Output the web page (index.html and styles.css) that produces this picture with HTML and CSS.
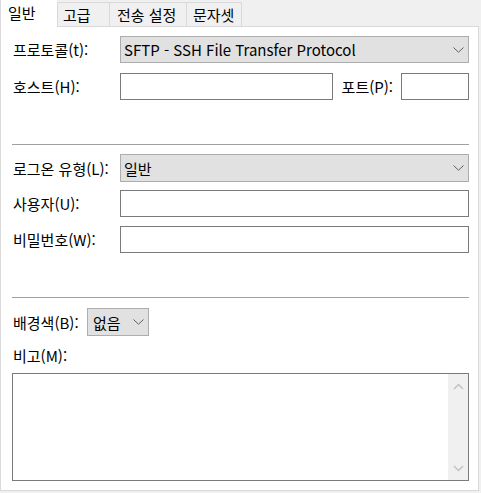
FILE: index.html
```html
<!DOCTYPE html>
<html lang="ko">
<head>
<meta charset="utf-8">
<link rel="stylesheet" href="styles.css">
</head>
<body>
<div class="window">
  <div class="tabs">
    <div class="tab active">일반</div>
    <div class="tab t2">고급</div>
    <div class="tab t3">전송 설정</div>
    <div class="tab t4">문자셋</div>
  </div>
  <div class="panel">
    <div class="row r-proto">
      <div class="label">프로토콜(t):</div>
      <div class="select grow">
        <span>SFTP - SSH File Transfer Protocol</span>
        <svg class="chev" width="11" height="6" viewBox="0 0 11 6"><path d="M0.5 0.5 L5.5 5.2 L10.5 0.5" fill="none" stroke="#606060" stroke-width="1"/></svg>
      </div>
    </div>
    <div class="row r-host">
      <div class="label">호스트(H):</div>
      <div class="input grow"></div>
      <div class="label port-label">포트(P):</div>
      <div class="input port"></div>
    </div>
    <div class="sep sep1"></div>
    <div class="row r-logon">
      <div class="label">로그온 유형(L):</div>
      <div class="select grow">
        <span>일반</span>
        <svg class="chev" width="11" height="6" viewBox="0 0 11 6"><path d="M0.5 0.5 L5.5 5.2 L10.5 0.5" fill="none" stroke="#606060" stroke-width="1"/></svg>
      </div>
    </div>
    <div class="row r-user">
      <div class="label">사용자(U):</div>
      <div class="input grow"></div>
    </div>
    <div class="row r-pass">
      <div class="label">비밀번호(W):</div>
      <div class="input grow"></div>
    </div>
    <div class="sep sep2"></div>
    <div class="row r-bg">
      <div class="label bg-label">배경색(B):</div>
      <div class="select small">
        <span>없음</span>
        <svg class="chev" width="11" height="6" viewBox="0 0 11 6"><path d="M0.5 0.5 L5.5 5.2 L10.5 0.5" fill="none" stroke="#606060" stroke-width="1"/></svg>
      </div>
    </div>
    <div class="memo-label">비고(M):</div>
    <div class="textarea">
      <div class="text-area-body"></div>
      <div class="scrollbar">
        <svg width="11" height="7" viewBox="0 0 11 7"><path d="M1 6 L5.5 1.5 L10 6" fill="none" stroke="#c2c2c2" stroke-width="1.5"/></svg>
        <svg width="11" height="7" viewBox="0 0 11 7"><path d="M1 1 L5.5 5.5 L10 1" fill="none" stroke="#c2c2c2" stroke-width="1.5"/></svg>
      </div>
    </div>
  </div>
</div>
</body>
</html>
```

FILE: styles.css
```css
html, body {
  margin: 0;
  padding: 0;
  background: #f0f0f0;
}
body {
  font-family: "Noto Sans CJK KR", "Noto Sans", sans-serif;
  font-size: 15px;
  color: #000;
}
.window {
  width: 479px;
}
.tabs {
  display: flex;
  align-items: flex-end;
  height: 26px;
}
.tab {
  box-sizing: border-box;
  height: 24px;
  background: #f0f0f0;
  border-top: 1px solid #d9d9d9;
  border-left: 1px solid #d9d9d9;
  display: flex;
  align-items: center;
  padding-left: 5px;
  line-height: 1;
}
.tab.active {
  position: relative;
  z-index: 1;
  height: 27px;
  margin-bottom: -1px;
  width: 57px;
  background: #fff;
  border-top: none;
  padding-left: 7px;
  padding-bottom: 2px;
}
.t2 { width: 52px; }
.t3 { width: 77px; padding-left: 7px; }
.t4 { width: 56px; border-right: 1px solid #d9d9d9; padding-left: 6px; }

.panel {
  box-sizing: border-box;
  width: 479px;
  height: 465px;
  background: #fff;
  border: 1px solid #d9d9d9;
  padding: 9px 9px 0 11px;
  display: flex;
  flex-direction: column;
}
.row {
  display: flex;
  align-items: center;
  height: 27px;
}
.label {
  width: 108px;
  flex: none;
  padding-left: 1px;
  box-sizing: border-box;
  white-space: nowrap;
  line-height: 1;
}
.grow { flex: 1; }
.select {
  box-sizing: border-box;
  height: 100%;
  background: #e1e1e1;
  border: 1px solid #adadad;
  display: flex;
  align-items: center;
  justify-content: space-between;
  padding: 0 4px 0 3px;
  line-height: 1;
}
.input {
  box-sizing: border-box;
  height: 100%;
  background: #fff;
  border: 1px solid #7a7a7a;
}
.r-host { margin-top: 10px; }
.port-label {
  width: auto;
  margin: 0 8px 0 9px;
  padding-left: 0;
}
.port { width: 68px; flex: none; }
.sep {
  height: 1px;
  background: #a0a0a0;
  flex: none;
}
.sep1 { margin-top: 44px; }
.r-logon { margin-top: 9px; height: 28px; }
.r-user { margin-top: 8px; }
.r-pass { margin-top: 9px; }
.sep2 { margin-top: 44px; }
.r-bg { margin-top: 10px; height: 28px; }
.bg-label { width: 75px; }
.small { width: 62px; padding-left: 5px; }
.memo-label {
  height: 20px;
  margin-top: 10px;
  line-height: 20px;
  padding-left: 1px;
}
.textarea {
  box-sizing: border-box;
  margin-top: 7px;
  height: 108px;
  border: 1px solid #7a7a7a;
  display: flex;
}
.text-area-body { flex: 1; }
.scrollbar {
  width: 20px;
  background: #f0f0f0;
  display: flex;
  flex-direction: column;
  align-items: center;
  justify-content: space-between;
  padding: 9px 0 8px;
  box-sizing: border-box;
}
.scrollbar svg { display: block; }
```
